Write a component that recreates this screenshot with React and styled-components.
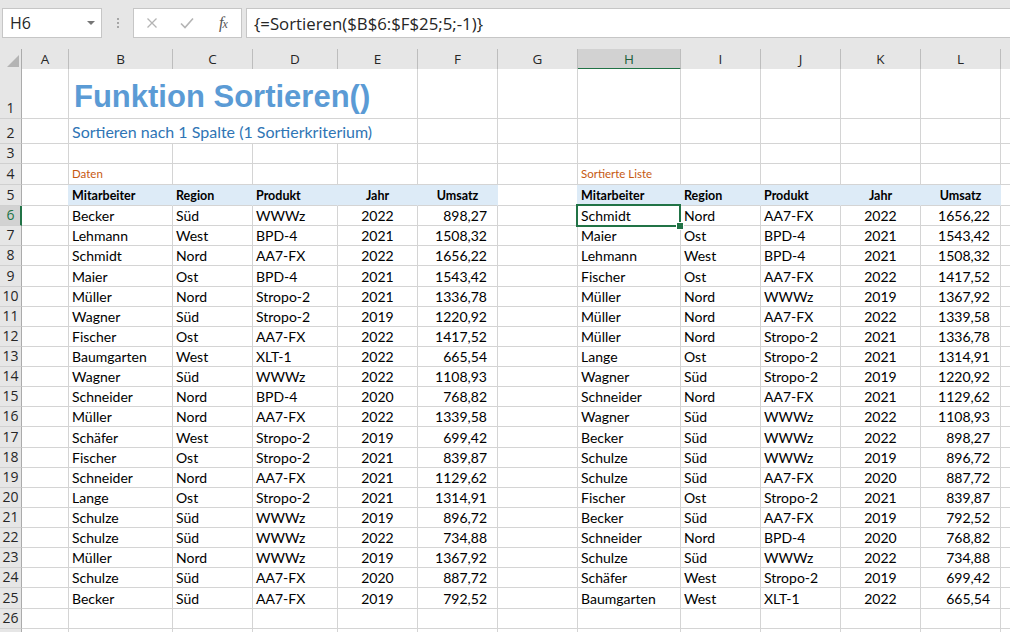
import React from "react";
import styled, { createGlobalStyle } from "styled-components";

const UI_FONT = `"Open Sans", "Noto Sans", sans-serif`;
const CELL_FONT = `Lato, "Liberation Sans", sans-serif`;
const GRID = "#d4d4d4";
const GREEN = "#217346";
const HEAD_FILL = "#ddebf7";

const GlobalStyle = createGlobalStyle`
  html, body {
    margin: 0;
    padding: 0;
    background: #fff;
    overflow: hidden;
  }
  * {
    box-sizing: border-box;
  }
`;

const Window = styled.div`
  width: 1010px;
  height: 632px;
  overflow: hidden;
  background: #fff;
  display: flex;
  flex-direction: column;
`;

/* ---------- formula bar ---------- */

const FormulaBar = styled.div`
  flex: none;
  height: 49px;
  background: #e6e6e6;
  display: flex;
  align-items: flex-start;
  padding: 8px 0 0 2px;
`;

const NameBox = styled.div`
  width: 100px;
  height: 30px;
  background: #fff;
  border: 1px solid #c6c6c6;
  display: flex;
  align-items: center;
  justify-content: space-between;
  padding: 0 6px 0 7px;
  font: 16px ${UI_FONT};
  color: #262626;
`;

const DropArrow = styled.span`
  width: 0;
  height: 0;
  border-left: 4px solid transparent;
  border-right: 4px solid transparent;
  border-top: 4px solid #767676;
`;

const Grip = styled.div`
  width: 31px;
  height: 30px;
  display: flex;
  flex-direction: column;
  align-items: center;
  justify-content: center;
  gap: 2px;
  & > span {
    width: 2px;
    height: 2px;
    background: #a6a6a6;
  }
`;

const FxBox = styled.div`
  width: 109px;
  height: 30px;
  background: #fff;
  border: 1px solid #c6c6c6;
  display: flex;
  align-items: center;
  padding-left: 12px;
  gap: 22px;
`;

const FxLabel = styled.span`
  font: italic 16px "Liberation Serif", serif;
  color: #555;
  padding-left: 3px;
  & > small {
    font-size: 12px;
    margin-left: -1px;
  }
`;

const FormulaInput = styled.div`
  flex: 1;
  height: 30px;
  margin-left: 4px;
  background: #fff;
  border: 1px solid #c6c6c6;
  border-right: none;
  display: flex;
  align-items: center;
  padding-left: 7px;
  font: 16.8px ${UI_FONT};
  color: #262626;
`;

/* ---------- sheet ---------- */

const COLS = ["A", "B", "C", "D", "E", "F", "G", "H", "I", "J", "K", "L", "M"];
const WIDTHS = [47, 104, 80, 85, 80, 80, 80, 103, 80, 80, 80, 80, 80];
// column M is only a sliver at the right edge, its letter lies off-screen
const visibleLetter = (c) => (c === "M" ? "" : c);

const Sheet = styled.div`
  flex: 1;
  display: flex;
  flex-direction: column;
`;

const SheetRow = styled.div`
  flex: none;
  display: grid;
  grid-template-columns: 22px ${WIDTHS.map((w) => `${w}px`).join(" ")};
  height: ${(p) => p.$h}px;
`;

const Corner = styled.div`
  background: #e6e6e6;
  border-right: 1px solid #ababab;
  border-bottom: 1px solid #ababab;
  display: flex;
  align-items: flex-end;
  justify-content: flex-end;
  padding: 0 2px 2px 0;
`;

const ColHead = styled.div`
  background: ${(p) => (p.$active ? "#d2d2d2" : "#e6e6e6")};
  border-right: 1px solid #bdbdbd;
  border-bottom: ${(p) => (p.$active ? `2px solid ${GREEN}` : "1px solid #ababab")};
  display: flex;
  align-items: center;
  justify-content: center;
  padding-top: ${(p) => (p.$active ? "1px" : "0")};
  font: 13.5px ${UI_FONT};
  color: ${(p) => (p.$active ? "#1d5e3b" : "#262626")};
`;

const RowHead = styled.div`
  background: ${(p) => (p.$active ? "#d2d2d2" : "#e6e6e6")};
  border-right: ${(p) => (p.$active ? `2px solid ${GREEN}` : "1px solid #ababab")};
  border-bottom: 1px solid #d0d0d0;
  display: flex;
  align-items: flex-end;
  justify-content: center;
  padding: 0 0 1px ${(p) => (p.$active ? "1px" : "0")};
  font: 14px ${UI_FONT};
  line-height: 18px;
  color: ${(p) => (p.$active ? GREEN : "#262626")};
`;

const justify = { left: "flex-start", center: "center", right: "flex-end" };

const Cell = styled.div`
  position: relative;
  grid-column: span ${(p) => p.$span || 1};
  display: flex;
  align-items: flex-end;
  justify-content: ${(p) => justify[p.$align || "left"]};
  padding: 0 ${(p) => (p.$align === "right" ? "10px" : "3px")} 0 3px;
  background: ${(p) => p.$fill || "#fff"};
  border-right: 1px solid ${(p) => p.$line || p.$fill || GRID};
  border-bottom: 1px solid ${GRID};
  font-family: ${CELL_FONT};
  font-size: ${(p) => (p.$bold ? "12.5px" : "14px")};
  font-weight: ${(p) => (p.$bold ? 700 : 400)};
  line-height: 18px;
  color: ${(p) => p.$color || "#000"};
  white-space: nowrap;
`;

const TitleCell = styled(Cell)`
  font: bold 31px "Liberation Sans", Arial, sans-serif;
  line-height: 38px;
  color: #5b9bd5;
  padding-left: 5px;
  padding-bottom: 2px;
`;

const SubtitleCell = styled(Cell)`
  font-size: 16px;
  line-height: 22px;
  color: #2f75b5;
  padding-left: 3px;
`;

const NoteCell = styled(Cell)`
  font-size: 11.5px;
  color: #c65911;
  padding-bottom: 1px;
`;

const Selection = styled.div`
  position: absolute;
  top: -2px;
  left: -2px;
  right: -1px;
  bottom: -2px;
  border: 2px solid ${GREEN};
  pointer-events: none;
  z-index: 2;
  &::after {
    content: "";
    position: absolute;
    right: -5px;
    bottom: -5px;
    width: 6px;
    height: 6px;
    background: ${GREEN};
    border: 1px solid #fff;
  }
`;

/* ---------- data ---------- */

const DATA = [
  ["Becker", "Süd", "WWWz", 2022, 898.27],
  ["Lehmann", "West", "BPD-4", 2021, 1508.32],
  ["Schmidt", "Nord", "AA7-FX", 2022, 1656.22],
  ["Maier", "Ost", "BPD-4", 2021, 1543.42],
  ["Müller", "Nord", "Stropo-2", 2021, 1336.78],
  ["Wagner", "Süd", "Stropo-2", 2019, 1220.92],
  ["Fischer", "Ost", "AA7-FX", 2022, 1417.52],
  ["Baumgarten", "West", "XLT-1", 2022, 665.54],
  ["Wagner", "Süd", "WWWz", 2022, 1108.93],
  ["Schneider", "Nord", "BPD-4", 2020, 768.82],
  ["Müller", "Nord", "AA7-FX", 2022, 1339.58],
  ["Schäfer", "West", "Stropo-2", 2019, 699.42],
  ["Fischer", "Ost", "Stropo-2", 2021, 839.87],
  ["Schneider", "Nord", "AA7-FX", 2021, 1129.62],
  ["Lange", "Ost", "Stropo-2", 2021, 1314.91],
  ["Schulze", "Süd", "WWWz", 2019, 896.72],
  ["Schulze", "Süd", "WWWz", 2022, 734.88],
  ["Müller", "Nord", "WWWz", 2019, 1367.92],
  ["Schulze", "Süd", "AA7-FX", 2020, 887.72],
  ["Becker", "Süd", "AA7-FX", 2019, 792.52],
];

// =Sortieren($B$6:$F$25;5;-1) -> by Umsatz, descending
const SORTED = [...DATA].sort((a, b) => b[4] - a[4]);

const HEADERS = ["Mitarbeiter", "Region", "Produkt", "Jahr", "Umsatz"];
const HEAD_ALIGN = ["left", "left", "left", "center", "center"];
const DATA_ALIGN = ["left", "left", "left", "center", "right"];

const fmt = (v) => (typeof v === "number" && v % 1 !== 0 ? v.toFixed(2).replace(".", ",") : v);

const ROW_H = 20.14;

function CloseIcon() {
  return (
    <svg width="12" height="12" viewBox="0 0 12 12">
      <path d="M1.5 1.5l9 9M10.5 1.5l-9 9" stroke="#b4b4b4" strokeWidth="1.3" fill="none" />
    </svg>
  );
}

function CheckIcon() {
  return (
    <svg width="14" height="12" viewBox="0 0 14 12">
      <path d="M1 6.5l4 4L13 1.5" stroke="#b4b4b4" strokeWidth="1.6" fill="none" />
    </svg>
  );
}

function CornerTriangle() {
  return (
    <svg width="12" height="12" viewBox="0 0 12 12">
      <path d="M12 0V12H0z" fill="#b4b4b4" />
    </svg>
  );
}

const plainCells = (cols) => cols.map((c) => <Cell key={c} />);

export default function App() {
  const sheetRows = [];

  sheetRows.push(
    <SheetRow key={1} $h={50}>
      <RowHead>1</RowHead>
      <Cell />
      <TitleCell $span={4}>Funktion Sortieren()</TitleCell>
      {plainCells(COLS.slice(5))}
    </SheetRow>
  );

  sheetRows.push(
    <SheetRow key={2} $h={25}>
      <RowHead>2</RowHead>
      <Cell />
      <SubtitleCell $span={4}>Sortieren nach 1 Spalte (1 Sortierkriterium)</SubtitleCell>
      {plainCells(COLS.slice(5))}
    </SheetRow>
  );

  sheetRows.push(
    <SheetRow key={3} $h={20}>
      <RowHead>3</RowHead>
      {plainCells(COLS)}
    </SheetRow>
  );

  sheetRows.push(
    <SheetRow key={4} $h={21}>
      <RowHead>4</RowHead>
      {COLS.map((c) =>
        c === "B" ? (
          <NoteCell key={c}>Daten</NoteCell>
        ) : c === "H" ? (
          <NoteCell key={c}>Sortierte Liste</NoteCell>
        ) : (
          <Cell key={c} />
        )
      )}
    </SheetRow>
  );

  sheetRows.push(
    <SheetRow key={5} $h={21}>
      <RowHead>5</RowHead>
      <Cell $line={HEAD_FILL} />
      {HEADERS.map((h, i) => (
        <Cell key={"l" + h} $fill={HEAD_FILL} $bold $align={HEAD_ALIGN[i]}>
          {h}
        </Cell>
      ))}
      <Cell $line={HEAD_FILL} />
      {HEADERS.map((h, i) => (
        <Cell key={"r" + h} $fill={HEAD_FILL} $bold $align={HEAD_ALIGN[i]}>
          {h}
        </Cell>
      ))}
      <Cell />
    </SheetRow>
  );

  for (let r = 6; r <= 27; r++) {
    const left = DATA[r - 6];
    const right = SORTED[r - 6];
    sheetRows.push(
      <SheetRow key={r} $h={ROW_H}>
        <RowHead $active={r === 6}>{r < 27 ? r : ""}</RowHead>
        <Cell />
        {[0, 1, 2, 3, 4].map((i) => (
          <Cell key={"l" + i} $align={DATA_ALIGN[i]}>
            {left ? fmt(left[i]) : ""}
          </Cell>
        ))}
        <Cell />
        {[0, 1, 2, 3, 4].map((i) => (
          <Cell key={"r" + i} $align={DATA_ALIGN[i]}>
            {right ? fmt(right[i]) : ""}
            {r === 6 && i === 0 && <Selection />}
          </Cell>
        ))}
        <Cell />
      </SheetRow>
    );
  }

  return (
    <Window>
      <GlobalStyle />
      <FormulaBar>
        <NameBox>
          H6
          <DropArrow />
        </NameBox>
        <Grip>
          <span />
          <span />
          <span />
        </Grip>
        <FxBox>
          <CloseIcon />
          <CheckIcon />
          <FxLabel>
            f<small>x</small>
          </FxLabel>
        </FxBox>
        <FormulaInput>{"{=Sortieren($B$6:$F$25;5;-1)}"}</FormulaInput>
      </FormulaBar>
      <Sheet>
        <SheetRow $h={20}>
          <Corner>
            <CornerTriangle />
          </Corner>
          {COLS.map((c) => (
            <ColHead key={c} $active={c === "H"}>
              {visibleLetter(c)}
            </ColHead>
          ))}
        </SheetRow>
        {sheetRows}
      </Sheet>
    </Window>
  );
}
